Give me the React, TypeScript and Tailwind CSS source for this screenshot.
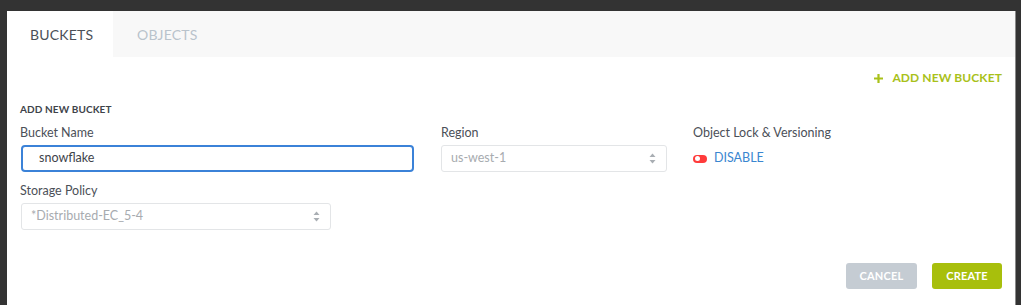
import React from 'react';

function Chevrons() {
  return (
    <svg width="7" height="11" viewBox="0 0 7 11" className="text-[#a9aeb3]">
      <path d="M3.5 0.5 L6.5 4 H0.5 Z" fill="currentColor" />
      <path d="M3.5 10.5 L6.5 7 H0.5 Z" fill="currentColor" />
    </svg>
  );
}

function SelectBox({ value, width }: { value: string; width: string }) {
  return (
    <div
      className={`${width} h-[27px] flex items-center justify-between pl-[9px] pr-[10px] border border-[#e3e5e7] rounded-[3px] bg-white`}
    >
      <span className="text-[12.5px] text-[#a7abaf]">{value}</span>
      <Chevrons />
    </div>
  );
}

export default function App() {
  return (
    <div
      className="w-[1021px] h-[305px] bg-[#333333] pl-[7px] pt-[11px] pr-[5px] overflow-hidden"
      style={{ fontFamily: 'Lato, "Open Sans", sans-serif' }}
    >
      <div className="h-full bg-white border-r border-[#8a8a8a]">
        {/* tabs */}
        <div className="flex h-[46px] bg-[#f8f8f8]">
          <div className="w-[106px] bg-white flex items-center pl-[23px] text-[14px] text-[#4b5058] tracking-[0.2px]">
            BUCKETS
          </div>
          <div className="flex items-center pl-[24px] text-[14px] text-[#b9c3cc] tracking-[0.2px]">
            OBJECTS
          </div>
        </div>

        {/* add new link */}
        <div className="flex justify-end pr-[13px] pt-[12px]">
          <div className="flex items-center gap-[9px] text-[12px] font-bold text-[#a9c11a] tracking-[0.1px]">
            <svg width="9" height="9" viewBox="0 0 9 9">
              <path d="M4.5 0 V9 M0 4.5 H9" stroke="currentColor" strokeWidth="2.2" />
            </svg>
            ADD NEW BUCKET
          </div>
        </div>

        {/* form */}
        <div className="px-[13px] pt-[16px]">
          <div className="text-[10px] font-bold text-[#3e434a] tracking-[0.1px] leading-[12px]">
            ADD NEW BUCKET
          </div>
          <div className="flex mt-[10px]">
            <div className="w-[421px]">
              <div className="text-[12.5px] text-[#4b5058] leading-[15px]">Bucket Name</div>
              <div className="mt-[5px] ml-[1px] w-[393px] h-[27px] flex items-center pl-[16px] border-[2px] border-[#3b82d8] rounded-[4px]">
                <span className="text-[12.5px] text-[#3e434a]">snowflake</span>
              </div>
            </div>
            <div className="w-[252px]">
              <div className="text-[12.5px] text-[#4b5058] leading-[15px]">Region</div>
              <div className="mt-[5px]">
                <SelectBox value="us-west-1" width="w-[226px]" />
              </div>
            </div>
            <div>
              <div className="text-[12.5px] text-[#4b5058] leading-[15px]">Object Lock &amp; Versioning</div>
              <div className="mt-[5px] h-[27px] flex items-center gap-[7px]">
                <div className="w-[14px] h-[8px] rounded-full bg-[#ff3b3b] flex items-center pl-[1.5px]">
                  <div className="w-[5px] h-[5px] rounded-full bg-white" />
                </div>
                <span className="text-[12.5px] text-[#3a86d0]">DISABLE</span>
              </div>
            </div>
          </div>

          <div className="mt-[11px]">
            <div className="text-[12.5px] text-[#4b5058] leading-[15px]">Storage Policy</div>
            <div className="mt-[5px] ml-[1px]">
              <SelectBox value="*Distributed-EC_5-4" width="w-[310px]" />
            </div>
          </div>

          <div className="flex justify-end gap-[15px] mt-[33px]">
            <button className="w-[71px] h-[26px] rounded-[3px] bg-[#c5ccd3] text-white text-[11px] font-bold tracking-[0.2px]">
              CANCEL
            </button>
            <button className="w-[70px] h-[26px] rounded-[3px] bg-[#a8bf0c] text-white text-[11px] font-bold tracking-[0.2px]">
              CREATE
            </button>
          </div>
        </div>
      </div>
    </div>
  );
}
